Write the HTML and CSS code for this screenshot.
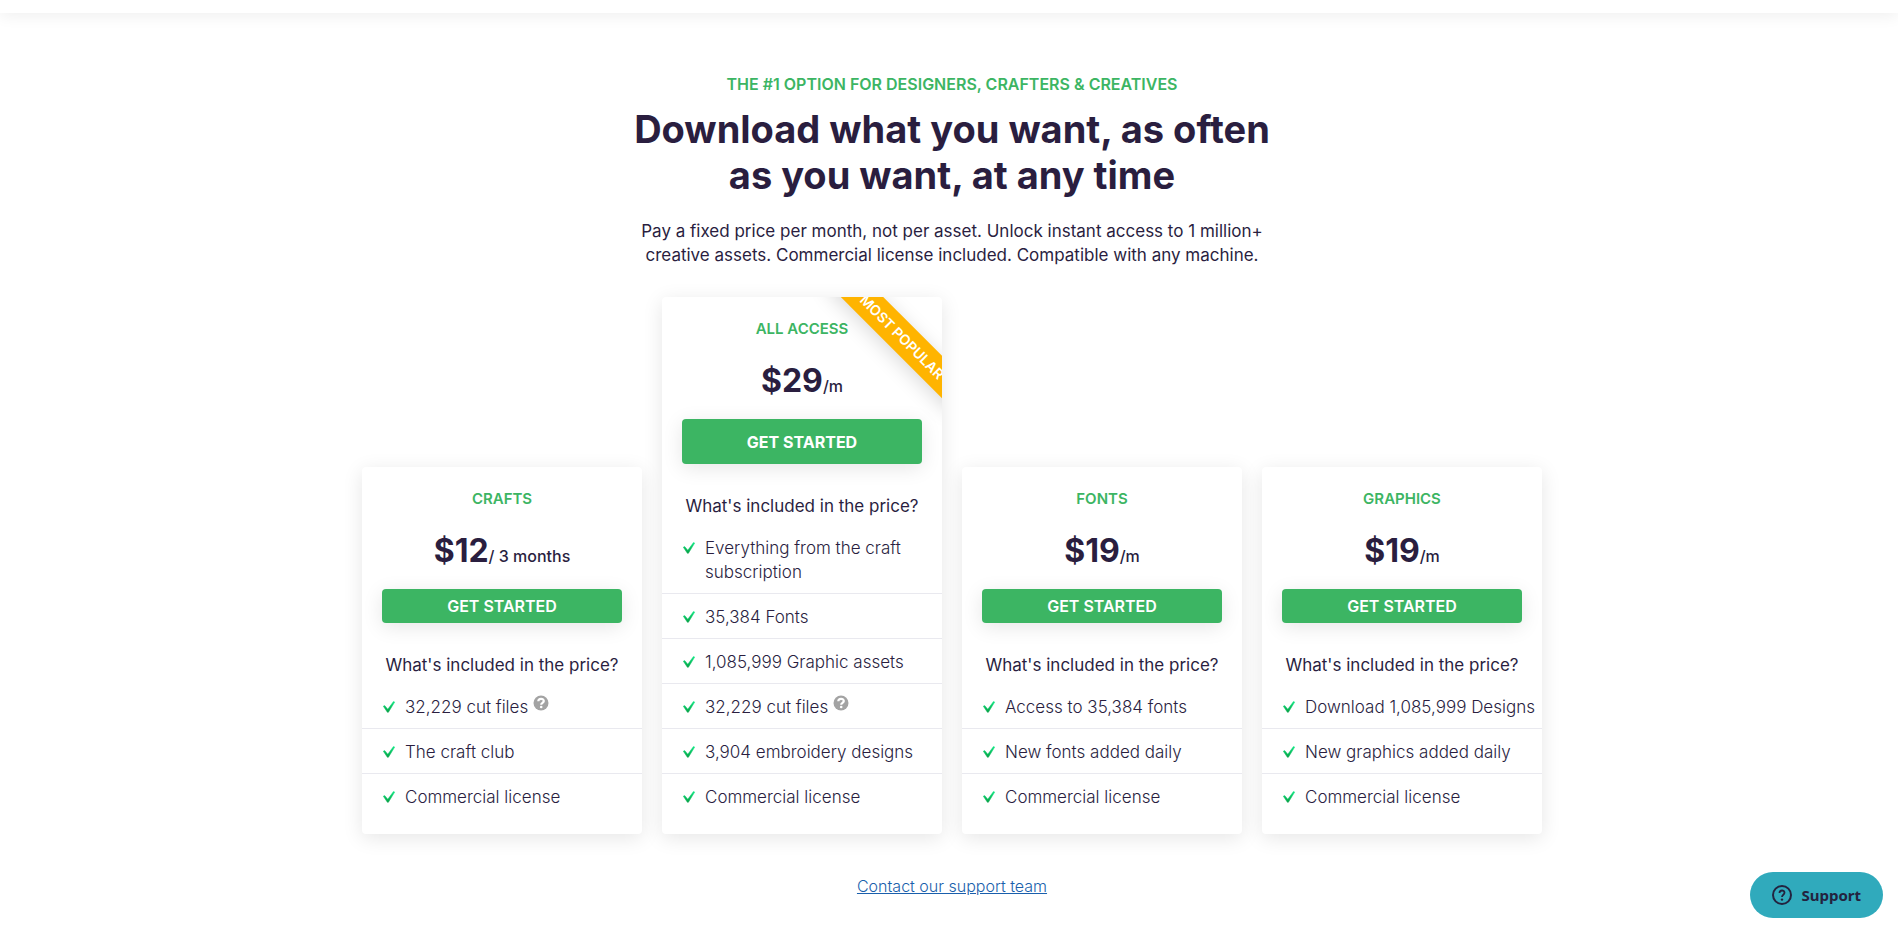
FILE: index.html
```html
<!DOCTYPE html>
<html lang="en">
<head>
    <meta charset="UTF-8">
    <meta name="viewport" content="width=device-width, initial-scale=1.0">
    <title>Pricing</title>
    <link rel="stylesheet" href="styles.css">
</head>
<body>
    <!-- Shared icons -->
    <svg class="sprite" aria-hidden="true">
        <defs>
            <linearGradient id="checkFill" x1="0" y1="0" x2="0" y2="1">
                <stop offset="0" stop-color="#0be881"/>
                <stop offset="1" stop-color="#05a045"/>
            </linearGradient>
        </defs>
        <symbol id="check" viewBox="0 0 12 12">
            <path d="M0.300 5.200 1.700 4.600 4.800 8.300 10.500 0.400 11.700 1.100 5.400 11.300H4.400Z" fill="url(#checkFill)" stroke="url(#checkFill)" stroke-width="0.500" stroke-linejoin="round"/>
        </symbol>
        <symbol id="help" viewBox="0 0 16 16">
            <circle cx="8" cy="8" r="7.500" fill="#a3a3a3"/>
            <path d="M5.300 6.300C5.400 3 10.800 3 10.800 6.100 10.800 7.900 8.200 7.800 8.200 9.700" fill="none" stroke="#fff" stroke-width="2.200"/>
            <circle cx="8.200" cy="12" r="1.300" fill="#fff"/>
        </symbol>
    </svg>

    <header class="topbar"></header>

    <main class="pricing">
        <p class="eyebrow">THE #1 OPTION FOR DESIGNERS, CRAFTERS &amp; CREATIVES</p>
        <h1>Download what you want, as often<br>as you want, at any time</h1>
        <p class="intro">Pay a fixed price per month, not per asset. Unlock instant access to 1 million+<br>creative assets. Commercial license included. Compatible with any machine.</p>

        <div class="plans">
            <section class="plan">
                <h2>CRAFTS</h2>
                <p class="price"><strong>$12</strong>/ 3 months</p>
                <button class="btn" type="button">GET STARTED</button>
                <h3>What's included in the price?</h3>
                <ul>
                    <li><svg class="check"><use href="#check"/></svg><span>32,229 cut files <svg class="help"><use href="#help"/></svg></span></li>
                    <li><svg class="check"><use href="#check"/></svg><span>The craft club</span></li>
                    <li><svg class="check"><use href="#check"/></svg><span>Commercial license</span></li>
                </ul>
            </section>

            <section class="plan">
                <div class="ribbon-box"><span class="ribbon">MOST POPULAR</span></div>
                <h2>ALL ACCESS</h2>
                <p class="price"><strong>$29</strong>/m</p>
                <button class="btn btn-large" type="button">GET STARTED</button>
                <h3>What's included in the price?</h3>
                <ul>
                    <li><svg class="check"><use href="#check"/></svg><span>Everything from the craft subscription</span></li>
                    <li><svg class="check"><use href="#check"/></svg><span>35,384 Fonts</span></li>
                    <li><svg class="check"><use href="#check"/></svg><span>1,085,999 Graphic assets</span></li>
                    <li><svg class="check"><use href="#check"/></svg><span>32,229 cut files <svg class="help"><use href="#help"/></svg></span></li>
                    <li><svg class="check"><use href="#check"/></svg><span>3,904 embroidery designs</span></li>
                    <li><svg class="check"><use href="#check"/></svg><span>Commercial license</span></li>
                </ul>
            </section>

            <section class="plan">
                <h2>FONTS</h2>
                <p class="price"><strong>$19</strong>/m</p>
                <button class="btn" type="button">GET STARTED</button>
                <h3>What's included in the price?</h3>
                <ul>
                    <li><svg class="check"><use href="#check"/></svg><span>Access to 35,384 fonts</span></li>
                    <li><svg class="check"><use href="#check"/></svg><span>New fonts added daily</span></li>
                    <li><svg class="check"><use href="#check"/></svg><span>Commercial license</span></li>
                </ul>
            </section>

            <section class="plan">
                <h2>GRAPHICS</h2>
                <p class="price"><strong>$19</strong>/m</p>
                <button class="btn" type="button">GET STARTED</button>
                <h3>What's included in the price?</h3>
                <ul>
                    <li><svg class="check"><use href="#check"/></svg><span>Download 1,085,999 Designs</span></li>
                    <li><svg class="check"><use href="#check"/></svg><span>New graphics added daily</span></li>
                    <li><svg class="check"><use href="#check"/></svg><span>Commercial license</span></li>
                </ul>
            </section>
        </div>

        <a class="contact" href="#">Contact our support team</a>
    </main>

    <button class="support" type="button">
        <svg viewBox="0 0 20 20">
            <circle cx="10" cy="10" r="9" fill="none" stroke="#23233f" stroke-width="2"/>
            <path d="M7.500 8C7.500 4.700 12.500 4.700 12.500 7.800 12.500 9.800 10 9.700 10 12" fill="none" stroke="#23233f" stroke-width="1.800"/>
            <circle cx="10" cy="14.600" r="1.200" fill="#23233f"/>
        </svg>
        Support
    </button>
</body>
</html>
```
FILE: styles.css
```css
* {
    box-sizing: border-box;
}
body {
    margin: 0;
    font-family: Inter, "Open Sans", sans-serif;
    font-size: 17px;
    line-height: 24px;
    color: #2a1e3f;
    background-color: #fff;
}
h1, h2, h3, p, ul {
    margin: 0;
    padding: 0;
}
.sprite {
    position: absolute;
    width: 0;
    height: 0;
}
.topbar {
    height: 13px;
    background-color: #fff;
    box-shadow: 0 2px 16px rgba(0, 0, 0, 0.08);
}
.pricing {
    display: flex;
    flex-direction: column;
    align-items: center;
    padding: 59px 0 30px 6px;
    text-align: center;
}
.eyebrow {
    color: #3cb563;
    font-size: 16px;
    font-weight: 600;
}
h1 {
    margin-top: 10px;
    font-size: 38px;
    font-weight: 700;
    line-height: 46px;
}
.intro {
    margin-top: 21px;
}

/* Plans */
.plans {
    display: grid;
    grid-template-columns: repeat(4, 1fr);
    align-items: end;
    gap: 20px;
    width: 100%;
    max-width: 1180px;
    margin-top: 30px;
}
.plan {
    position: relative;
    padding: 20px 0 16px;
    border-radius: 4px;
    background-color: #fff;
    box-shadow: 0 4px 20px rgba(0, 0, 0, 0.1);
}
.plan h2 {
    color: #3cb563;
    font-size: 15px;
    font-weight: 600;
    line-height: 24px;
}
.price {
    margin: 22px 0 10px;
    font-size: 16px;
    font-weight: 500;
    line-height: 46px;
}
.price strong {
    font-size: 32px;
    font-weight: 700;
    line-height: 32px;
}
.btn {
    display: block;
    width: calc(100% - 40px);
    height: 34px;
    margin: 0 20px;
    border: none;
    border-radius: 4px;
    background-color: #3cb563;
    box-shadow: 0 4px 20px rgba(0, 0, 0, 0.1);
    color: #fff;
    font-family: inherit;
    font-size: 16px;
    font-weight: 600;
    cursor: pointer;
}
.btn-large {
    height: 45px;
    font-weight: 700;
}
.plan h3 {
    margin: 30px 0 7px;
    font-size: 17px;
    font-weight: 400;
    line-height: 24px;
}
.plan ul {
    list-style: none;
    text-align: left;
}
.plan li {
    display: flex;
    gap: 10px;
    padding: 11px 5px 9px 21px;
    border-bottom: 1px solid #e9e9ef;
    font-weight: 300;
}
.plan li:last-child {
    border-bottom: none;
}
.check {
    flex: none;
    width: 12px;
    height: 12px;
    margin-top: 6px;
}
.help {
    width: 16px;
    height: 16px;
    vertical-align: 2px;
}

/* Corner ribbon */
.ribbon-box {
    position: absolute;
    top: 0;
    right: 0;
    width: 140px;
    height: 140px;
    overflow: hidden;
}
.ribbon {
    position: absolute;
    top: 25px;
    right: -50px;
    width: 180px;
    background-color: #ffb400;
    box-shadow: 0 4px 20px rgba(0, 0, 0, 0.15);
    color: #fff;
    font-size: 14px;
    font-weight: 600;
    line-height: 30px;
    text-align: center;
    transform: rotate(45deg);
}

.contact {
    margin-top: 40px;
    color: #1a5fac;
    font-size: 16px;
    font-weight: 300;
}
.support {
    position: fixed;
    right: 15px;
    bottom: 10px;
    display: flex;
    align-items: center;
    gap: 9px;
    height: 46px;
    padding: 0 22px;
    border: none;
    border-radius: 23px;
    background-color: #30aabc;
    color: #23233f;
    font-family: "Noto Sans", sans-serif;
    font-size: 15px;
    font-weight: 700;
    cursor: pointer;
}
.support svg {
    width: 20px;
    height: 20px;
}
```
